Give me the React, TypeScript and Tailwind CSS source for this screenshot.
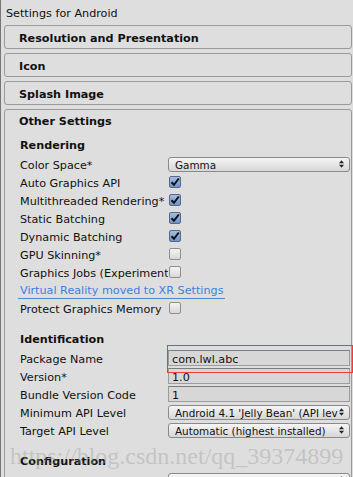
import React from "react";

const FONT = "font-['DejaVu_Sans',Verdana,sans-serif]";

const FOLDOUTS = ["Resolution and Presentation", "Icon", "Splash Image"];

function Arrows() {
  return (
    <svg width="5" height="8" viewBox="0 0 5 8" className="absolute right-[5px] top-1/2 -translate-y-1/2">
      <path d="M0 3.2 L2.5 0.2 L5 3.2 Z" fill="#222" />
      <path d="M0 4.8 L2.5 7.8 L5 4.8 Z" fill="#222" />
    </svg>
  );
}

function Dropdown({ value }: { value: string }) {
  return (
    <div className="relative flex h-[15px] flex-1 items-center overflow-hidden rounded-[3px] border border-[#8a8a8a] bg-gradient-to-b from-[#f6f6f6] to-[#d6d6d6] pl-[6px] pr-[11px]">
      <span className="overflow-hidden whitespace-nowrap pt-[2px] text-[10.4px] leading-[12px]">{value}</span>
      <Arrows />
    </div>
  );
}

function Field({ value }: { value: string }) {
  return (
    <div className="flex h-[16px] flex-1 items-center border border-[#9c9c9c] border-t-[#7c7c7c] bg-[#d7d7d7] pl-[3px]">
      <span className="pt-[2px] leading-[13px]">{value}</span>
    </div>
  );
}

function Check({ on }: { on: boolean }) {
  if (!on) {
    return (
      <div className="ml-[1px] h-[12px] w-[12px] rounded-[2px] border border-[#8e8e8e] bg-gradient-to-b from-[#f4f4f4] to-[#d8d8d8]" />
    );
  }
  return (
    <div className="ml-[1px] flex h-[12px] w-[12px] items-center justify-center rounded-[2px] border border-[#56698a] bg-gradient-to-b from-[#a4bde3] to-[#7094c8]">
      <svg width="10" height="10" viewBox="0 0 10 10">
        <path d="M1.5 5.2 L4 7.8 L8.8 1.5" stroke="#111" strokeWidth="2" fill="none" />
      </svg>
    </div>
  );
}

function Row({ label, children }: { label: string; children?: React.ReactNode }) {
  return (
    <div className="flex h-[18px] items-center">
      <div className="w-[148px] shrink-0 overflow-hidden whitespace-nowrap pt-[2px] leading-[13px]">{label}</div>
      {children}
    </div>
  );
}

function Heading({ children }: { children: React.ReactNode }) {
  return <div className="flex h-[18px] items-center pt-[2px] font-bold leading-[13px]">{children}</div>;
}

export default function App() {
  return (
    <div
      className={`relative h-[477px] w-[353px] overflow-hidden border-l border-[#767676] bg-[#dedede] text-[11.2px] text-[#111] ${FONT}`}
    >
      <div className="flex h-[25px] items-center pl-[5px] pt-[2px] leading-[13px]">Settings for Android</div>

      {FOLDOUTS.map((name) => (
        <div
          key={name}
          className="mb-[4px] ml-[3px] mr-[1px] flex h-[24px] items-center rounded-[3px] border border-[#9a9a9a] pl-[14px] pt-[2px] font-bold leading-[13px]"
        >
          {name}
        </div>
      ))}

      <div className="ml-[3px] mr-[1px] h-[400px] rounded-t-[3px] border border-[#9a9a9a] pl-[15px] pr-[1px]">
        <div className="-ml-[1px] flex h-[21px] items-center pt-[2px] font-bold leading-[13px]">Other Settings</div>

        <div className="mt-[4px]">
          <Heading>Rendering</Heading>
          <div className="mt-[2px]">
            <Row label="Color Space*">
              <Dropdown value="Gamma" />
            </Row>
            <Row label="Auto Graphics API">
              <Check on />
            </Row>
            <Row label="Multithreaded Rendering*">
              <Check on />
            </Row>
            <Row label="Static Batching">
              <Check on />
            </Row>
            <Row label="Dynamic Batching">
              <Check on />
            </Row>
            <Row label="GPU Skinning*">
              <Check on={false} />
            </Row>
            <Row label="Graphics Jobs (Experimental)*">
              <Check on={false} />
            </Row>
            <div className="flex h-[18px] items-center">
              <span className="-ml-[2px] border-b border-[#4a88dc] px-[2px] pt-[2px] leading-[14px] text-[#3f80de]">
                Virtual Reality moved to XR Settings
              </span>
            </div>
            <Row label="Protect Graphics Memory">
              <Check on={false} />
            </Row>
          </div>
        </div>

        <div className="mt-[12px]">
          <Heading>Identification</Heading>
          <div className="mt-[2px]">
            <Row label="Package Name">
              <Field value="com.lwl.abc" />
            </Row>
            <Row label="Version*">
              <Field value="1.0" />
            </Row>
            <Row label="Bundle Version Code">
              <Field value="1" />
            </Row>
            <Row label="Minimum API Level">
              <Dropdown value="Android 4.1 'Jelly Bean' (API level 16)" />
            </Row>
            <Row label="Target API Level">
              <Dropdown value="Automatic (highest installed)" />
            </Row>
          </div>
        </div>

        <div className="mt-[12px]">
          <Heading>Configuration</Heading>
          <div className="mt-[2px]">
            <Row label="Scripting Runtime Version">
              <Dropdown value="Stable (.NET 3.5 Equivalent)" />
            </Row>
          </div>
        </div>
      </div>

      {/* red highlight around package name */}
      <div className="pointer-events-none absolute left-[166px] top-[345px] h-[28px] w-[186px] border border-[#ee3b3b]" />

      {/* csdn watermark */}
      <div className="pointer-events-none absolute left-[9px] top-[443px] whitespace-nowrap font-['Liberation_Serif',serif] text-[24px] leading-[26px] text-[#9a9a9a]/40">
        https://blog.csdn.net/qq_39374899
      </div>
    </div>
  );
}
